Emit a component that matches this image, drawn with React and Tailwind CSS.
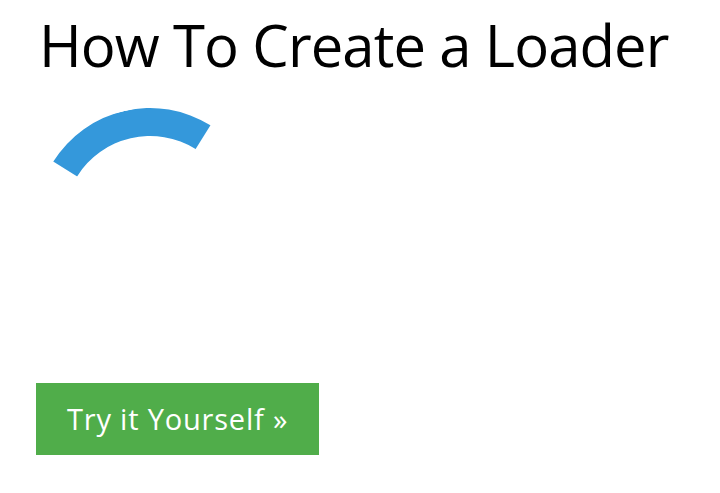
export default function App() {
  return (
    <div className="min-h-screen bg-white pl-[36px] font-['Open_Sans',sans-serif] text-black">
      <h1 className="mt-[15px] text-[58px] leading-[60px] font-normal pl-[3px] tracking-[-0.9px]">
        How To Create a Loader
      </h1>
      <div className="mt-[33px] h-[228px] w-[228px] rotate-[-13deg] rounded-full border-[28px] border-transparent border-t-[#3498db]" />
      <button className="mt-[47px] flex h-[72px] w-[283px] items-center bg-[#50ad4a] pl-[31px] text-[29px] tracking-[0.8px] text-white">
        Try it Yourself »
      </button>
    </div>
  );
}
